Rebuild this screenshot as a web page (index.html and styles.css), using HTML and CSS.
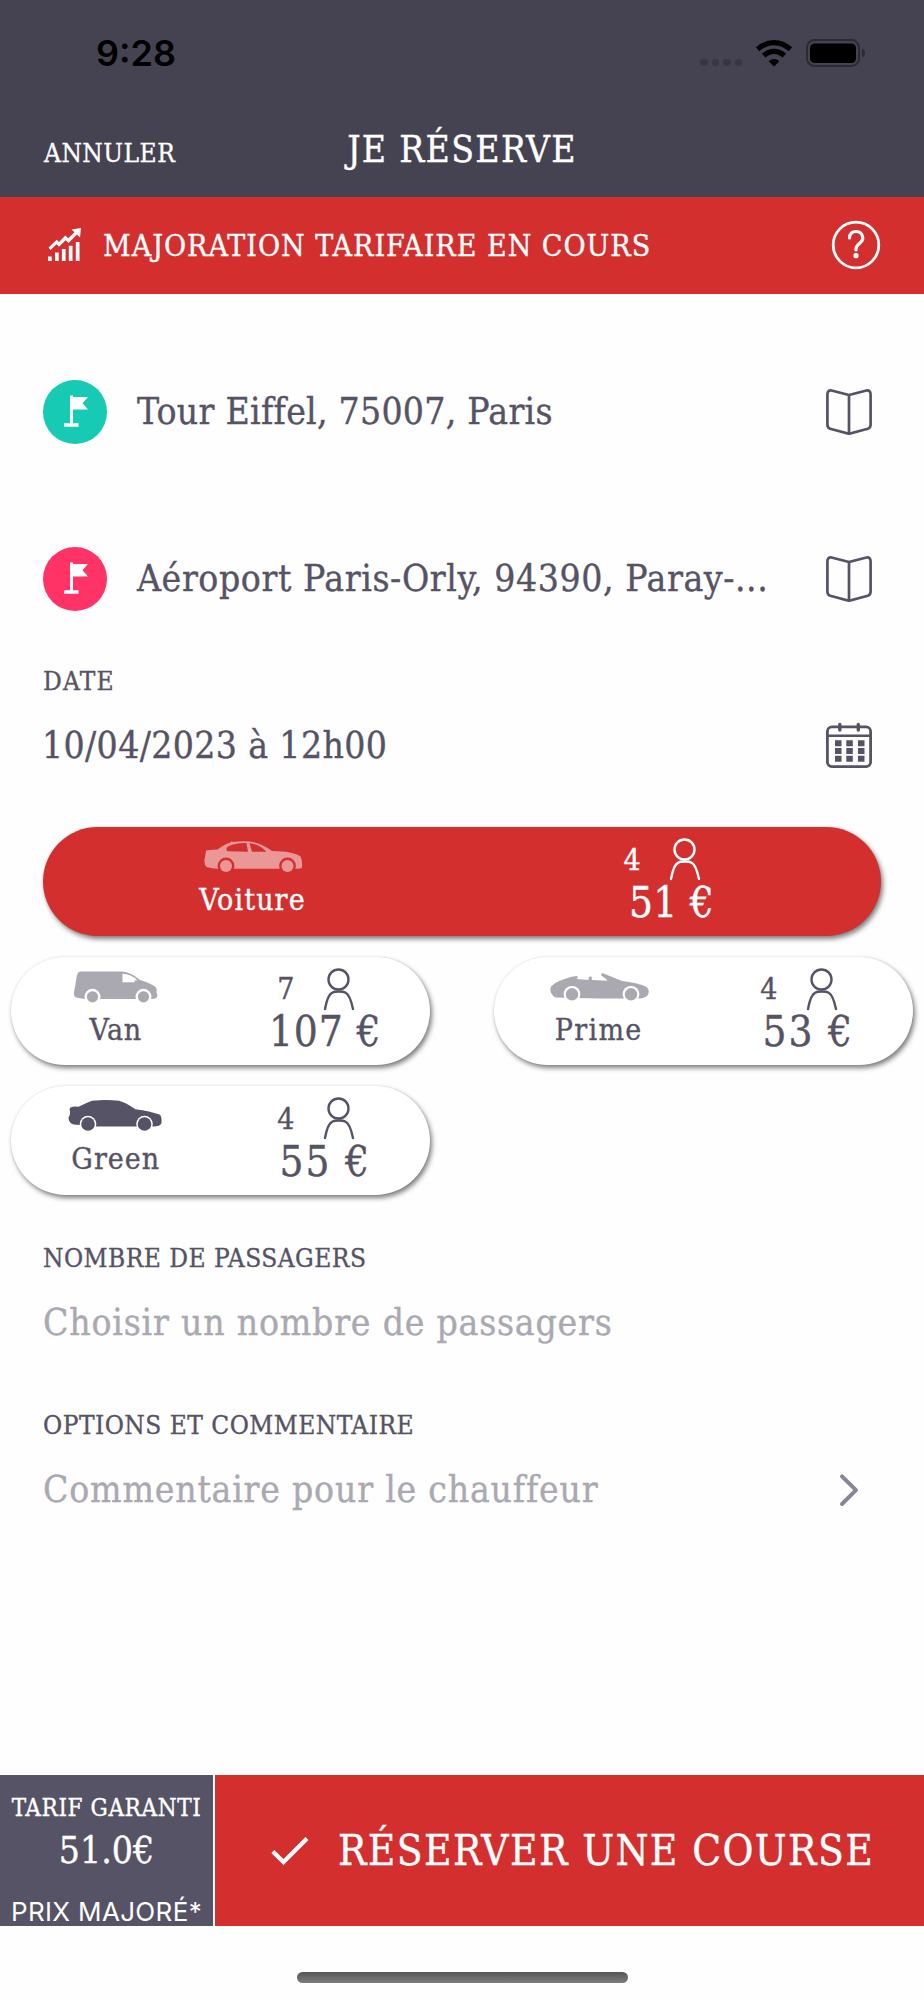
FILE: index.html
```html
<!DOCTYPE html>
<html lang="fr">
<head>
<meta charset="utf-8">
<title>Je réserve</title>
<link rel="stylesheet" href="styles.css">
</head>
<body>
<svg class="defs" aria-hidden="true">
  <defs>
    <symbol id="flag" viewBox="0 0 64 64"><path d="M27 15.500h3v1.500h15l-5.500 6.200 5.500 6.400H30v13.700h5.500v3.400H21v-3.400h6z" fill="#fff"/></symbol>
    <symbol id="map" viewBox="0 0 46 46"><path d="M23 6L5.500 1.500Q1.400 1 1.400 5.500V35.500Q1.400 38.800 4.200 39.800L23 44.800 41.800 39.800Q44.600 38.800 44.600 35.500V5.500Q44.600 1 40.500 1.500ZM23 6V44.500" fill="none" stroke="#555365" stroke-width="2.700" stroke-linejoin="round"/></symbol>
    <symbol id="person" viewBox="0 0 32 42.500"><g fill="none" stroke="currentColor" stroke-width="2.400" stroke-linecap="round"><circle cx="15.500" cy="11.500" r="10"/><path d="M2 41Q4.500 27 9 24.800Q11 23.500 15.800 23.500T22.700 24.800Q27 27 30 41"/></g></symbol>
  </defs>
</svg>

<header class="header">
  <div class="status">
    <span class="time">9:28</span>
    <div class="status-icons">
      <div class="signal"><i></i><i></i><i></i><i></i></div>
      <svg class="wifi" viewBox="0 0 36 27"><g fill="none" stroke="#000" stroke-width="5.200"><path d="M1.600 9.300Q9 2.600 18 2.600T34.400 9.300"/><path d="M7.700 15.600Q12.300 11.300 18 11.300T28.300 15.600"/></g><path d="M12.600 21.200Q18 16.600 23.400 21.200L18 26.600Z"/></svg>
      <svg class="battery" viewBox="0 0 60 28"><rect x="1" y="1" width="52" height="26" rx="7.500" fill="none" stroke="#2b2a34" stroke-width="2"/><rect x="4" y="4.500" width="46" height="19.500" rx="4.500"/><path d="M56 9.500Q59 11 59 14T56 18.500Z" fill="#2b2a34"/></svg>
    </div>
  </div>
  <nav class="nav">
    <a class="cancel">ANNULER</a>
    <h1 class="title">JE RÉSERVE</h1>
    <span></span>
  </nav>
</header>

<section class="banner">
  <svg class="trend" viewBox="0 0 35 34"><g fill="#fff"><path d="M1 28.500h3.700V33H1zM8 24.500h3.700V33H8zM14.900 21h3.700v12h-3.700zM21.800 17.800h3.700V33h-3.700zM28.800 14h3.700v19h-3.700z"/><path d="M24.500 1.500L34 0 33 9.500 30 6.500 21.500 15 18.500 12.300 12 18.800 9.500 16.300 3.500 22 1.500 19.500 9.800 11.800 12 14 18.300 7.500 21.300 10.200 27.500 4.200Z"/></g></svg>
  <span class="banner-text">MAJORATION TARIFAIRE EN COURS</span>
  <svg class="help" viewBox="0 0 50 50"><g fill="none" stroke="#fff" stroke-width="2.800"><circle cx="25" cy="25" r="22.800"/><path d="M18.500 18Q18.800 11.500 25 11.500T31.800 18C31.800 23.500 25 23.500 25 29V30" stroke-width="3.200" stroke-linecap="round"/></g><circle cx="25" cy="35.700" r="2.600" fill="#fff"/></svg>
</section>

<main class="form">
  <div class="address">
    <span class="pin pickup"><svg><use href="#flag"/></svg></span>
    <span class="value from">Tour Eiffel, 75007, Paris</span>
    <svg class="action"><use href="#map"/></svg>
  </div>
  <div class="address">
    <span class="pin dropoff"><svg><use href="#flag"/></svg></span>
    <span class="value to">Aéroport Paris-Orly, 94390, Paray-...</span>
    <svg class="action"><use href="#map"/></svg>
  </div>
  <div class="field date">
    <label class="label label-date">DATE</label>
    <div class="line">
      <span class="value datetime">10/04/2023 à 12h00</span>
      <svg class="action" viewBox="0 0 46 46"><g fill="none" stroke="#555365"><rect x="1.400" y="3.900" width="43.200" height="39.700" rx="4.500" stroke-width="2.800"/><path d="M1 12.800H45" stroke-width="2.400"/><path d="M13.800 1.500V7M32.300 1.500V7" stroke-width="3.400" stroke-linecap="round"/></g><path d="M9 17.200h6.500v6H9zm11.300 0h6.500v6h-6.500zm11.700 0h6.500v6H32zM9 25h6.500v6H9zm11.300 0h6.500v6h-6.500zM32 25h6.500v6H32zM9 32.800h6.500v6H9zm11.300 0h6.500v6h-6.500zm11.700 0h6.500v6H32z" fill="#555365"/></svg>
    </div>
  </div>

  <div class="vehicles">
    <div class="pill selected">
      <div class="kind">
        <svg class="car sedan" viewBox="0 0 100 42"><path fill-rule="evenodd" d="M3 12.500Q10 11.500 14.500 11.500 22 6 27.500 4.500L28 3.300 30 4Q38 3 46 3.500 57 4.500 69 13 90 13.200 97.500 18.500Q99.500 22 99 29.500 98 30.800 93 30.800H14.500Q7 30 3.500 29 1 27 1.500 21.500 2.500 17 3 12.500ZM43.500 5Q32 4.500 25 8.500 22 11 24.500 13.200L45 13.700ZM46.500 5L49 13.700H63.500Q57 6.500 46.500 5Z"/><circle class="arch" cx="23" cy="28" r="8.400"/><circle class="arch" cx="84.500" cy="28" r="8.400"/><circle cx="23" cy="28" r="6"/><circle cx="84.500" cy="28" r="6"/></svg>
        <span class="name n-voiture">Voiture</span>
      </div>
      <div class="offer">
        <div class="seats"><span>4</span><svg><use href="#person"/></svg></div>
        <span class="price">51 €</span>
      </div>
    </div>
    <div class="pill">
      <div class="kind">
        <svg class="car van" viewBox="0 0 100 42"><path fill-rule="evenodd" d="M14 3.500H56Q65 4 74 12 86 15.500 90 19.500 91 21 90.500 25 92 26 91 29 90 31 86.500 31H19L10 29.500Q7.500 28 8 24.500L10.500 10Q11 4.500 14 3.500ZM56.500 5.800V14.200H68.500V12.500H71.500Q65 5.800 56.500 5.800Z"/><circle class="arch" cx="26.500" cy="28.800" r="8"/><circle class="arch" cx="77.500" cy="28.800" r="8"/><circle cx="26.500" cy="28.800" r="5.600"/><circle cx="77.500" cy="28.800" r="5.600"/></svg>
        <span class="name n-van">Van</span>
      </div>
      <div class="offer">
        <div class="seats"><span>7</span><svg><use href="#person"/></svg></div>
        <span class="price wide">107 €</span>
      </div>
    </div>
    <div class="pill">
      <div class="kind">
        <svg class="car prime" viewBox="0 0 100 42"><path d="M1.500 20Q3 15 17 10.500 23 8.200 28 8L29 9.200 27.500 11 39.500 12 40 8.800 42.500 8.500 43 12 58.500 12.800Q58 11.500 52 7.200 52 5 54 5.200L73 13Q88 14.500 97 18.500 100.500 21 99.500 25.500 98 30 90 30.500H50L6.500 29.500Q.500 26 1.500 20Z"/><circle class="arch" cx="23" cy="26.300" r="8.400"/><circle class="arch" cx="82" cy="26.300" r="8.400"/><circle cx="23" cy="26.300" r="6.200"/><circle cx="82" cy="26.300" r="6.200"/></svg>
        <span class="name n-prime">Prime</span>
      </div>
      <div class="offer">
        <div class="seats"><span>4</span><svg><use href="#person"/></svg></div>
        <span class="price mid">53 €</span>
      </div>
    </div>
    <div class="pill">
      <div class="kind">
        <svg class="car green" viewBox="0 0 100 42"><path d="M4.500 10.500Q8 9 12.500 9.800 20 6 26 3.800 40 2.200 53 3.800 58 4.800 69.500 12.200 84 14 93.500 17.500 96 19 95.500 26 94.500 29.500 87 29.500H30L8 27.500Q2.500 26.500 2.500 20.500 5 17 3.500 12Z"/><circle class="arch" cx="22" cy="27" r="8.300"/><circle class="arch" cx="78.500" cy="27" r="8.300"/><circle cx="22" cy="27" r="6.800"/><circle cx="78.500" cy="27" r="6.800"/></svg>
        <span class="name n-green">Green</span>
      </div>
      <div class="offer">
        <div class="seats"><span>4</span><svg><use href="#person"/></svg></div>
        <span class="price mid">55 €</span>
      </div>
    </div>
  </div>

  <div class="field">
    <label class="label">NOMBRE DE PASSAGERS</label>
    <div class="line"><span class="value placeholder">Choisir un nombre de passagers</span></div>
  </div>
  <div class="field">
    <label class="label">OPTIONS ET COMMENTAIRE</label>
    <div class="line">
      <span class="value placeholder">Commentaire pour le chauffeur</span>
      <svg class="action" viewBox="0 0 46 46"><path d="M16 9.300L30 23.200 16 37" fill="none" stroke="#888695" stroke-width="4" stroke-linecap="round" stroke-linejoin="round"/></svg>
    </div>
  </div>
</main>

<footer class="footer">
  <div class="fare">
    <span class="fare-label">TARIF GARANTI</span>
    <span class="fare-value">51.0€</span>
    <span class="fare-note">PRIX MAJORÉ*</span>
  </div>
  <button class="book">
    <svg viewBox="0 0 38 30"><path d="M1.800 15.500L12.500 26 36 2.500" fill="none" stroke="#fff" stroke-width="4.200"/></svg>
    <span>RÉSERVER UNE COURSE</span>
  </button>
</footer>
<div class="home"></div>
</body>
</html>
```
FILE: styles.css
```css
* { box-sizing: border-box; }
body {
  margin: 0;
  width: 924px;
  height: 2000px;
  display: flex;
  flex-direction: column;
  background: #fefefe;
  color: #555365;
  font-family: "DejaVu Serif Condensed", "DejaVu Serif", serif;
  font-stretch: condensed;
  -webkit-text-stroke: 0.35px currentColor;
  overflow: hidden;
}
svg { display: block; flex: none; overflow: visible; }
.defs { position: absolute; width: 0; height: 0; }

.header { height: 197px; background: #454351; color: #fff; }
.status {
  height: 106px;
  padding: 0 58px 0 96px;
  display: flex;
  justify-content: space-between;
  align-items: center;
  color: #000;
}
.time { font: 600 36px/50px Inter, sans-serif; -webkit-text-stroke: 0; }
.status-icons { display: flex; align-items: center; }
.signal { display: flex; gap: 4px; margin: 19px 14px 0 0; }
.signal i { width: 7.500px; height: 7.500px; border-radius: 3px; background: #373642; }
.wifi { width: 36px; height: 27px; margin-right: 14px; }
.battery { width: 60px; height: 28px; }

.nav {
  height: 86px;
  padding: 0 44px;
  display: grid;
  grid-template-columns: 1fr auto 1fr;
  align-items: center;
}
.cancel { font-size: 26px; letter-spacing: 0.5px; padding-top: 8px; }
.title { margin: 0; font-size: 37px; font-weight: 400; letter-spacing: 1.3px; }

.banner {
  height: 96.500px;
  padding: 0 43px 0 47px;
  display: flex;
  align-items: center;
  background: #d32f2f;
  color: #fff;
}
.trend { width: 35px; height: 34px; margin-right: 21px; }
.banner-text { flex: 1; font-size: 30px; letter-spacing: 1px; white-space: nowrap; }
.help { width: 50px; height: 50px; }

.form { flex: 1; padding-top: 35px; }
.address { height: 167px; padding: 0 52px 0 43px; display: flex; align-items: center; }
.pin { width: 64px; height: 64px; margin-right: 30px; border-radius: 50%; }
.pin svg { width: 64px; height: 64px; }
.pickup { background: #17cab3; }
.dropoff { background: #ff3366; }
.value { flex: 1; font-size: 37px; line-height: 60px; white-space: nowrap; }
.from { letter-spacing: 0.25px; }
.to { letter-spacing: 0.57px; }
.datetime { letter-spacing: 0.35px; margin-left: -1px; }
.action { width: 46px; height: 46px; }
.field { height: 167px; padding: 0 52px 0 43px; }
.date { height: 164.500px; }
.label { display: block; font-size: 26px; line-height: 36px; letter-spacing: 0.48px; }
.label-date { letter-spacing: 1.2px; }
.line { height: 60px; margin-top: 17px; display: flex; align-items: center; }
.placeholder { color: #aaa9b2; letter-spacing: 0.77px; }

.vehicles {
  display: grid;
  grid-template-columns: 419px 419px;
  justify-content: space-between;
  row-gap: 21px;
  padding: 0 11px;
  margin-bottom: 45px;
}
.pill {
  height: 108.500px;
  display: grid;
  grid-template-columns: 1fr 1fr;
  border-radius: 55px;
  background: #fff;
  box-shadow: 2px 3px 5px rgba(0, 0, 0, 0.5), 0 0 2px rgba(0, 0, 0, 0.1);
}
.selected { grid-column: 1 / -1; margin: 0 32px; background: #d32f2f; color: #fff; }
.kind, .offer { display: flex; flex-direction: column; align-items: center; padding-top: 11px; }
.car { width: 100px; height: 42px; fill: #aaa9b2; }
.sedan { fill: #e99897; }
.green { fill: #555365; }
.arch { fill: #fff; }
.sedan .arch { fill: #d32f2f; }
.name { font-size: 30px; line-height: 40px; }
.n-voiture { letter-spacing: 1.1px; }
.n-van { letter-spacing: 0.8px; }
.n-prime { letter-spacing: 1.3px; }
.n-green { letter-spacing: 1px; }
.seats {
  height: 42.500px;
  margin-right: 20px;
  display: flex;
  align-items: center;
  gap: 27px;
  font-size: 30px;
}
.seats span { width: 20px; text-align: center; }
.seats svg { width: 32px; height: 42.500px; }
.price { font-size: 42px; line-height: 44px; letter-spacing: 0.2px; }
.mid { letter-spacing: 1.8px; }
.wide { letter-spacing: 0.9px; }

.footer { height: 151px; display: flex; gap: 2px; }
.fare {
  width: 213px;
  padding-top: 12.500px;
  display: flex;
  flex-direction: column;
  align-items: center;
  background: #555365;
  color: #fff;
  white-space: nowrap;
}
.fare-label { font-size: 24px; line-height: 40px; letter-spacing: 0.6px; }
.fare-value { font-size: 37px; line-height: 46px; }
.fare-note {
  margin-top: 23.500px;
  font: 400 26px/30px Inter, sans-serif;
  letter-spacing: 0.35px;
  -webkit-text-stroke: 0;
}
.book {
  flex: 1;
  padding: 0 0 0 56px;
  border: 0;
  display: flex;
  align-items: center;
  gap: 29px;
  background: #d32f2f;
  color: #fff;
  font: inherit;
  font-size: 42px;
  letter-spacing: 1.38px;
  white-space: nowrap;
}
.book svg { width: 38px; height: 30px; }
.home {
  width: 331px;
  height: 11px;
  margin: 45.500px auto 17.500px;
  border-radius: 6px;
  background: linear-gradient(#555, #7d7d7d);
}
```
